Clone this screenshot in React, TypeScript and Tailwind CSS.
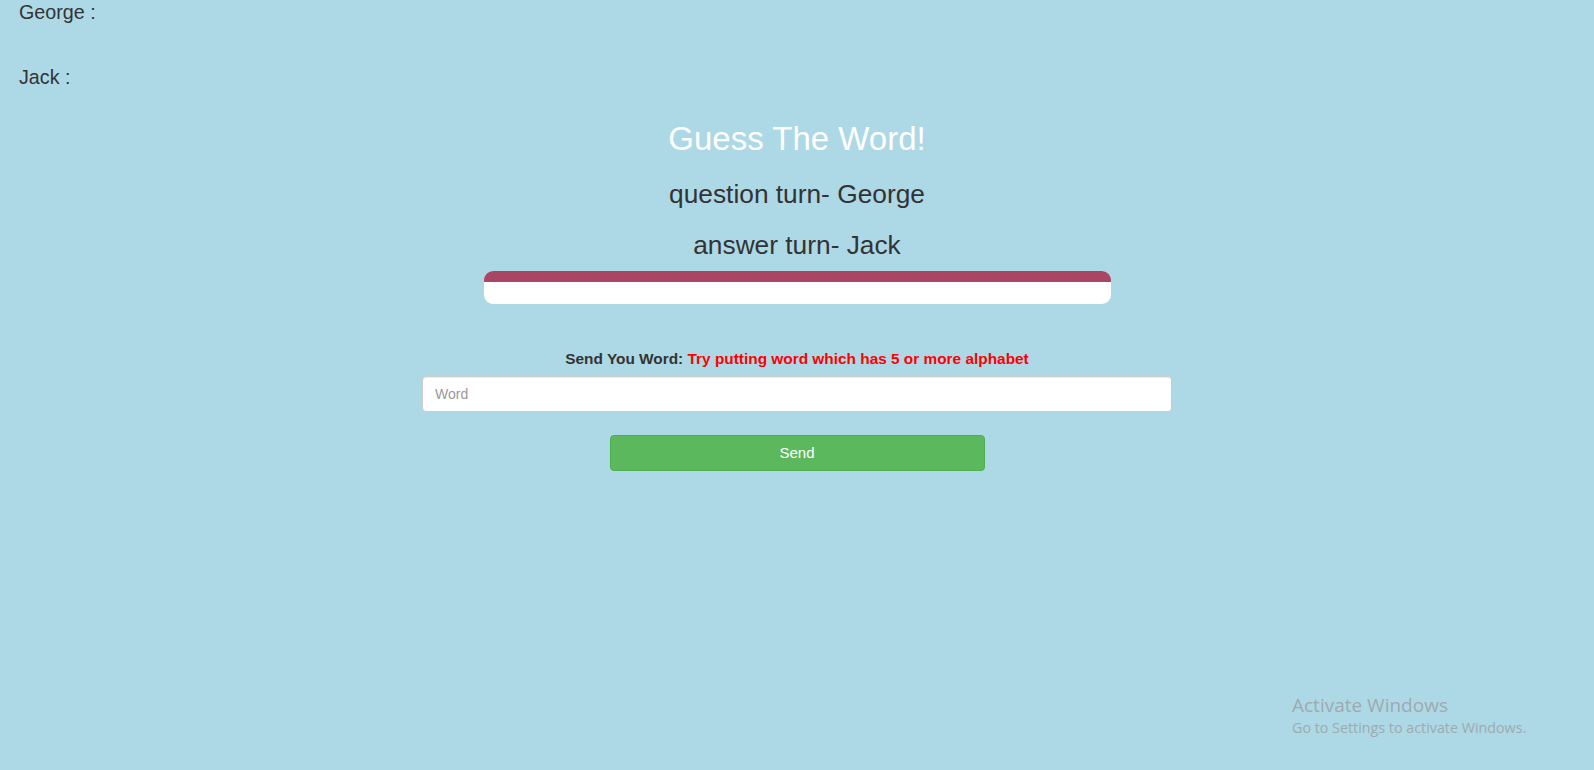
export default function App() {
  return (
    <div className="relative min-h-[770px] w-full bg-[#add8e6] font-['Liberation_Sans',Arial,sans-serif] text-[#333]">
      {/* players */}
      <div className="pl-[19px]">
        <p className="text-[19.7px] leading-[24px]">George :</p>
        <p className="mt-[41px] text-[19.7px] leading-[24px]">Jack :</p>
      </div>

      {/* game header */}
      <div className="mt-[30px] flex flex-col items-center">
        <h1 className="text-[33px] leading-[40px] text-white">Guess The Word!</h1>
        <h3 className="mt-[17px] text-[26.3px] leading-[36px]">question turn- George</h3>
        <h3 className="mt-[15px] text-[26.3px] leading-[36px]">answer turn- Jack</h3>
        <div className="mt-[8px] w-[627px] overflow-hidden rounded-[9px] bg-white">
          <div className="h-[11px] w-full bg-[#a94664]" />
          <div className="h-[22px]" />
        </div>
      </div>

      {/* word form */}
      <div className="mt-[45px] flex flex-col items-center">
        <label className="text-[15.4px] font-bold leading-[20px]">
          Send You Word: <span className="text-[#ff0000]">Try putting word which has 5 or more alphabet</span>
        </label>
        <input
          type="text"
          placeholder="Word"
          className="mt-[7px] h-[36px] w-[750px] rounded-[4px] border border-[#ccc] bg-white px-[12px] text-[14px] text-[#555] shadow-[inset_0_1px_1px_rgba(0,0,0,0.075)] outline-none placeholder:text-[#999]"
        />
        <button className="mt-[23px] h-[36px] w-[375px] rounded-[4px] border border-[#4cae4c] bg-[#5cb85c] text-[15px] text-white">
          Send
        </button>
      </div>

      {/* windows watermark */}
      <div className="absolute left-[1292px] top-[692px] font-['Open_Sans',sans-serif] text-[#9eaab0]">
        <p className="text-[19px] leading-[26px]">Activate Windows</p>
        <p className="text-[14.3px] leading-[20px]">Go to Settings to activate Windows.</p>
      </div>
    </div>
  )
}
